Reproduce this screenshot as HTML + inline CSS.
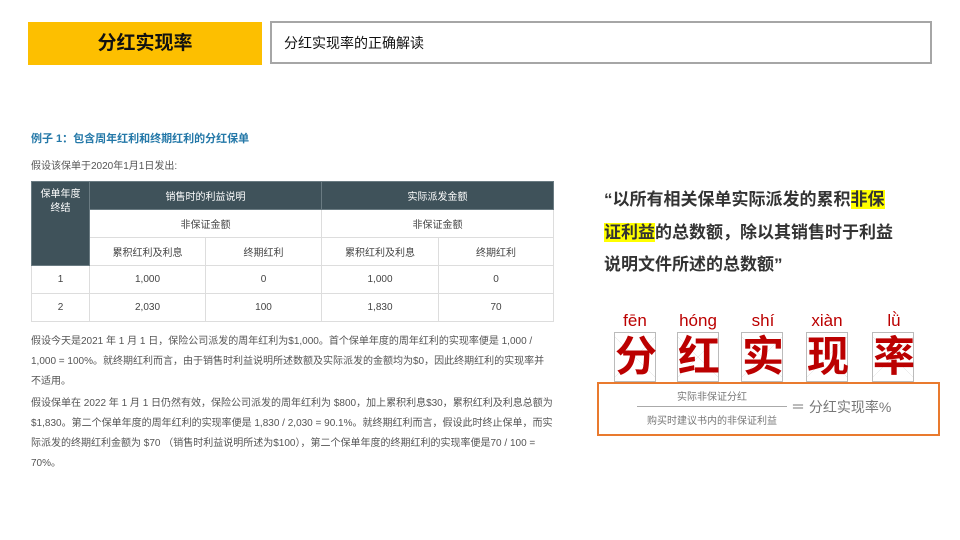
<!DOCTYPE html>
<html><head><meta charset="utf-8"><style>
*{margin:0;padding:0;box-sizing:border-box}
body{width:960px;height:540px;background:#fff;position:relative;overflow:hidden;font-family:"Liberation Sans","Noto Sans CJK SC",sans-serif}
.abs{position:absolute}
.y{left:28px;top:22px;width:234px;height:43px;background:#fdbf00;font-size:19px;font-weight:bold;color:#111;text-align:center;line-height:43px}
.t{left:270px;top:21px;width:662px;height:43px;border:2px solid #a6a6a6;font-size:14px;color:#111;line-height:40px;padding-left:12px}
table{position:absolute;left:31px;top:181px;border-collapse:collapse;font-size:10px;color:#444}
td{border:1px solid #ddd;text-align:center;height:28px;padding:0}
.h{background:#3f525a;color:#fff;border-color:#6a7b82}
.p{font-size:10px;color:#555;line-height:20px}
.ch{width:42px;height:50px;border:1px solid #bbb;color:#b00;font-size:42px;line-height:48px;text-align:center;font-weight:bold;background:linear-gradient(45deg,transparent 49.5%,#ddd 50%,transparent 50.5%),linear-gradient(-45deg,transparent 49.5%,#ddd 50%,transparent 50.5%)}
.py{color:#b00;font-size:17px;width:50px;text-align:center}
.q{left:604px;top:184px;font-size:17px;font-weight:bold;color:#333;line-height:32.5px;width:330px}
.hl{background:#ffff00}
</style></head><body>
<div class="abs y">分红实现率</div>
<div class="abs t">分红实现率的正确解读</div>
<div class="abs" style="left:31px;top:130px;font-size:11px;color:#2478a8;font-weight:bold">例子 1：包含周年红利和终期红利的分红保单</div>
<div class="abs" style="left:31px;top:157px;font-size:10px;color:#555">假设该保单于2020年1月1日发出:</div>
<table>
<tr><td class="h" rowspan="3" style="width:58px;vertical-align:top;padding-top:6px;line-height:14px">保单年度<br>终结</td><td class="h" colspan="2" style="height:27px">销售时的利益说明</td><td class="h" colspan="2">实际派发金额</td></tr>
<tr><td colspan="2">非保证金额</td><td colspan="2">非保证金额</td></tr>
<tr><td style="width:116px;height:27px">累积红利及利息</td><td style="width:116px">终期红利</td><td style="width:117px">累积红利及利息</td><td style="width:115px">终期红利</td></tr>
<tr><td>1</td><td>1,000</td><td>0</td><td>1,000</td><td>0</td></tr>
<tr><td>2</td><td>2,030</td><td>100</td><td>1,830</td><td>70</td></tr>
</table>
<div class="abs p" style="left:31px;top:332px;width:522px">假设今天是2021 年 1 月 1 日，保险公司派发的周年红利为$1,000。首个保单年度的周年红利的实现率便是 1,000 / 1,000 = 100%。就终期红利而言，由于销售时利益说明所述数额及实际派发的金额均为$0，因此终期红利的实现率并不适用。</div>
<div class="abs p" style="left:31px;top:394px;width:522px">假设保单在 2022 年 1 月 1 日仍然有效，保险公司派发的周年红利为 $800，加上累积利息$30，累积红利及利息总额为$1,830。第二个保单年度的周年红利的实现率便是 1,830 / 2,030 = 90.1%。就终期红利而言，假设此时终止保单，而实际派发的终期红利金额为 $70 （销售时利益说明所述为$100），第二个保单年度的终期红利的实现率便是70 / 100 = 70%。</div>
<div class="abs q">“以所有相关保单实际派发的累积<span class="hl">非保</span><br><span class="hl">证利益</span>的总数额，除以其销售时于利益<br>说明文件所述的总数额”</div>
<div class="abs py" style="left:610px;top:311px">fēn</div>
<div class="abs py" style="left:673px;top:311px">hóng</div>
<div class="abs py" style="left:738px;top:311px">shí</div>
<div class="abs py" style="left:802px;top:311px">xiàn</div>
<div class="abs py" style="left:869px;top:311px">lǜ</div>
<div class="abs ch" style="left:614px;top:332px">分</div>
<div class="abs ch" style="left:677px;top:332px">红</div>
<div class="abs ch" style="left:741px;top:332px">实</div>
<div class="abs ch" style="left:806px;top:332px">现</div>
<div class="abs ch" style="left:872px;top:332px">率</div>
<div class="abs" style="left:597px;top:382px;width:343px;height:54px;border:2px solid #e97a2e;background:#fff"></div>
<div class="abs" style="left:637px;top:388px;width:150px;text-align:center;font-size:10px;color:#777">实际非保证分红</div>
<div class="abs" style="left:637px;top:406px;width:150px;border-top:1px solid #aaa"></div>
<div class="abs" style="left:637px;top:412px;width:150px;text-align:center;font-size:10px;color:#777">购买时建议书内的非保证利益</div>
<div class="abs" style="left:791px;top:397px;font-size:14px;color:#777">＝ 分红实现率%</div>
</body></html>
